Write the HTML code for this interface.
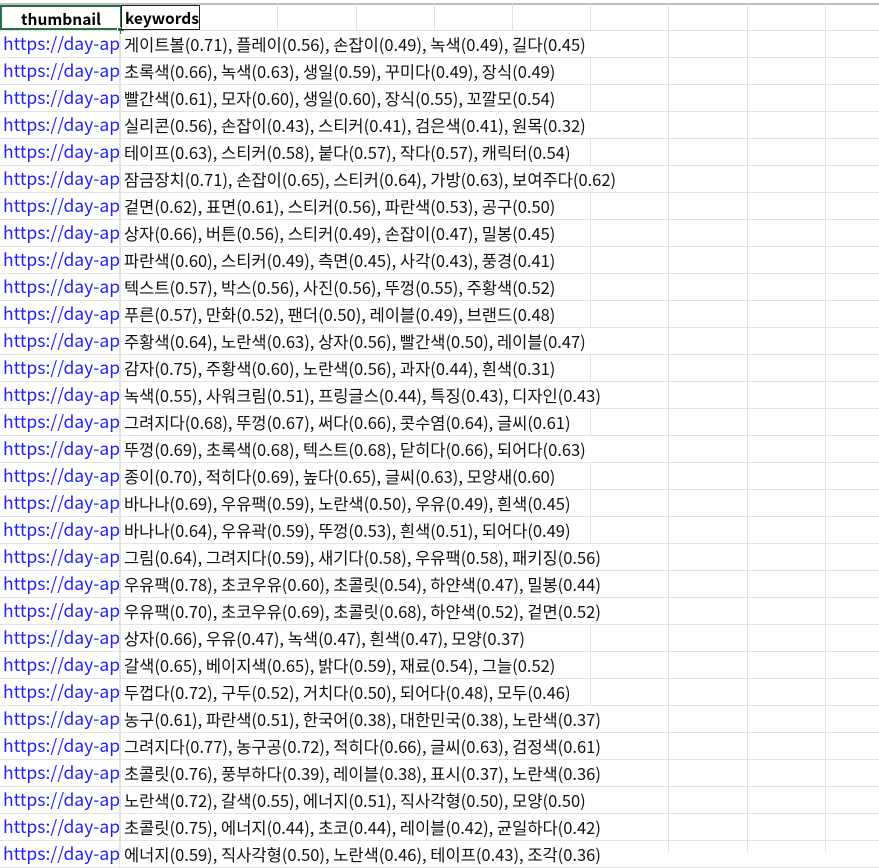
<!DOCTYPE html>
<html><head><meta charset="utf-8"><style>
html,body{margin:0;padding:0;background:#fff;width:879px;height:852px;overflow:hidden}
.vl{position:absolute;top:4px;bottom:0;width:1px;background:#e2e2e2}
.top{position:absolute;left:0;top:3px;width:879px;height:2px;background:#bdbdbd}
.row{position:absolute;left:0;width:879px;height:27px;border-bottom:1px solid #e2e2e2;box-sizing:border-box}
.u{position:absolute;left:0;top:0;width:120px;height:26px;overflow:hidden;white-space:nowrap;color:#1f1fff;font:17.5px "Noto Sans CJK KR","Liberation Sans",sans-serif;line-height:26px;padding-left:3px;box-sizing:border-box;background:#fff;border-right:1px solid #e2e2e2}
.k{position:absolute;left:121px;top:0;height:26px;white-space:nowrap;color:#111;font:16.5px "Noto Sans CJK KR","Liberation Sans",sans-serif;line-height:26px;padding:0 6px 0 3px;background:#fff}
.h{position:absolute;top:5px;height:25px;font:bold 15.5px "Noto Sans CJK KR","Liberation Sans",sans-serif;line-height:24px;box-sizing:border-box}
</style></head><body>
<div class="top"></div>
<div class="vl" style="left:120px"></div>
<div class="vl" style="left:198px"></div>
<div class="vl" style="left:277px"></div>
<div class="vl" style="left:356px"></div>
<div class="vl" style="left:434px"></div>
<div class="vl" style="left:512px"></div>
<div class="vl" style="left:590px"></div>
<div class="vl" style="left:668px"></div>
<div class="vl" style="left:747px"></div>
<div class="vl" style="left:825px"></div>
<div class="row" style="top:4px;height:27px;background:transparent"></div>
<div class="h" style="left:0;width:122px;border:2px solid #217346;text-align:center;background:#fff">thumbnail</div>
<div style="position:absolute;left:117px;top:27px;width:6px;height:6px;background:#217346;border:1px solid #fff"></div>
<div class="h" style="left:121px;width:79px;border:1px solid #222;padding-left:3px;background:#fff">keywords</div>
<div class="row" style="top:31px"><div class="u">https://day-apple</div><div class="k">게이트볼(0.71), 플레이(0.56), 손잡이(0.49), 녹색(0.49), 길다(0.45)</div></div>
<div class="row" style="top:58px"><div class="u">https://day-apple</div><div class="k">초록색(0.66), 녹색(0.63), 생일(0.59), 꾸미다(0.49), 장식(0.49)</div></div>
<div class="row" style="top:85px"><div class="u">https://day-apple</div><div class="k">빨간색(0.61), 모자(0.60), 생일(0.60), 장식(0.55), 꼬깔모(0.54)</div></div>
<div class="row" style="top:112px"><div class="u">https://day-apple</div><div class="k">실리콘(0.56), 손잡이(0.43), 스티커(0.41), 검은색(0.41), 원목(0.32)</div></div>
<div class="row" style="top:139px"><div class="u">https://day-apple</div><div class="k">테이프(0.63), 스티커(0.58), 붙다(0.57), 작다(0.57), 캐릭터(0.54)</div></div>
<div class="row" style="top:166px"><div class="u">https://day-apple</div><div class="k">잠금장치(0.71), 손잡이(0.65), 스티커(0.64), 가방(0.63), 보여주다(0.62)</div></div>
<div class="row" style="top:193px"><div class="u">https://day-apple</div><div class="k">겉면(0.62), 표면(0.61), 스티커(0.56), 파란색(0.53), 공구(0.50)</div></div>
<div class="row" style="top:220px"><div class="u">https://day-apple</div><div class="k">상자(0.66), 버튼(0.56), 스티커(0.49), 손잡이(0.47), 밀봉(0.45)</div></div>
<div class="row" style="top:247px"><div class="u">https://day-apple</div><div class="k">파란색(0.60), 스티커(0.49), 측면(0.45), 사각(0.43), 풍경(0.41)</div></div>
<div class="row" style="top:274px"><div class="u">https://day-apple</div><div class="k">텍스트(0.57), 박스(0.56), 사진(0.56), 뚜껑(0.55), 주황색(0.52)</div></div>
<div class="row" style="top:301px"><div class="u">https://day-apple</div><div class="k">푸른(0.57), 만화(0.52), 팬더(0.50), 레이블(0.49), 브랜드(0.48)</div></div>
<div class="row" style="top:328px"><div class="u">https://day-apple</div><div class="k">주황색(0.64), 노란색(0.63), 상자(0.56), 빨간색(0.50), 레이블(0.47)</div></div>
<div class="row" style="top:355px"><div class="u">https://day-apple</div><div class="k">감자(0.75), 주황색(0.60), 노란색(0.56), 과자(0.44), 흰색(0.31)</div></div>
<div class="row" style="top:382px"><div class="u">https://day-apple</div><div class="k">녹색(0.55), 사워크림(0.51), 프링글스(0.44), 특징(0.43), 디자인(0.43)</div></div>
<div class="row" style="top:409px"><div class="u">https://day-apple</div><div class="k">그려지다(0.68), 뚜껑(0.67), 써다(0.66), 콧수염(0.64), 글씨(0.61)</div></div>
<div class="row" style="top:436px"><div class="u">https://day-apple</div><div class="k">뚜껑(0.69), 초록색(0.68), 텍스트(0.68), 닫히다(0.66), 되어다(0.63)</div></div>
<div class="row" style="top:463px"><div class="u">https://day-apple</div><div class="k">종이(0.70), 적히다(0.69), 높다(0.65), 글씨(0.63), 모양새(0.60)</div></div>
<div class="row" style="top:490px"><div class="u">https://day-apple</div><div class="k">바나나(0.69), 우유팩(0.59), 노란색(0.50), 우유(0.49), 흰색(0.45)</div></div>
<div class="row" style="top:517px"><div class="u">https://day-apple</div><div class="k">바나나(0.64), 우유곽(0.59), 뚜껑(0.53), 흰색(0.51), 되어다(0.49)</div></div>
<div class="row" style="top:544px"><div class="u">https://day-apple</div><div class="k">그림(0.64), 그려지다(0.59), 새기다(0.58), 우유팩(0.58), 패키징(0.56)</div></div>
<div class="row" style="top:571px"><div class="u">https://day-apple</div><div class="k">우유팩(0.78), 초코우유(0.60), 초콜릿(0.54), 하얀색(0.47), 밀봉(0.44)</div></div>
<div class="row" style="top:598px"><div class="u">https://day-apple</div><div class="k">우유팩(0.70), 초코우유(0.69), 초콜릿(0.68), 하얀색(0.52), 겉면(0.52)</div></div>
<div class="row" style="top:625px"><div class="u">https://day-apple</div><div class="k">상자(0.66), 우유(0.47), 녹색(0.47), 흰색(0.47), 모양(0.37)</div></div>
<div class="row" style="top:652px"><div class="u">https://day-apple</div><div class="k">갈색(0.65), 베이지색(0.65), 밝다(0.59), 재료(0.54), 그늘(0.52)</div></div>
<div class="row" style="top:679px"><div class="u">https://day-apple</div><div class="k">두껍다(0.72), 구두(0.52), 거치다(0.50), 되어다(0.48), 모두(0.46)</div></div>
<div class="row" style="top:706px"><div class="u">https://day-apple</div><div class="k">농구(0.61), 파란색(0.51), 한국어(0.38), 대한민국(0.38), 노란색(0.37)</div></div>
<div class="row" style="top:733px"><div class="u">https://day-apple</div><div class="k">그려지다(0.77), 농구공(0.72), 적히다(0.66), 글씨(0.63), 검정색(0.61)</div></div>
<div class="row" style="top:760px"><div class="u">https://day-apple</div><div class="k">초콜릿(0.76), 풍부하다(0.39), 레이블(0.38), 표시(0.37), 노란색(0.36)</div></div>
<div class="row" style="top:787px"><div class="u">https://day-apple</div><div class="k">노란색(0.72), 갈색(0.55), 에너지(0.51), 직사각형(0.50), 모양(0.50)</div></div>
<div class="row" style="top:814px"><div class="u">https://day-apple</div><div class="k">초콜릿(0.75), 에너지(0.44), 초코(0.44), 레이블(0.42), 균일하다(0.42)</div></div>
<div class="row" style="top:841px"><div class="u">https://day-apple</div><div class="k">에너지(0.59), 직사각형(0.50), 노란색(0.46), 테이프(0.43), 조각(0.36)</div></div>
</body></html>
